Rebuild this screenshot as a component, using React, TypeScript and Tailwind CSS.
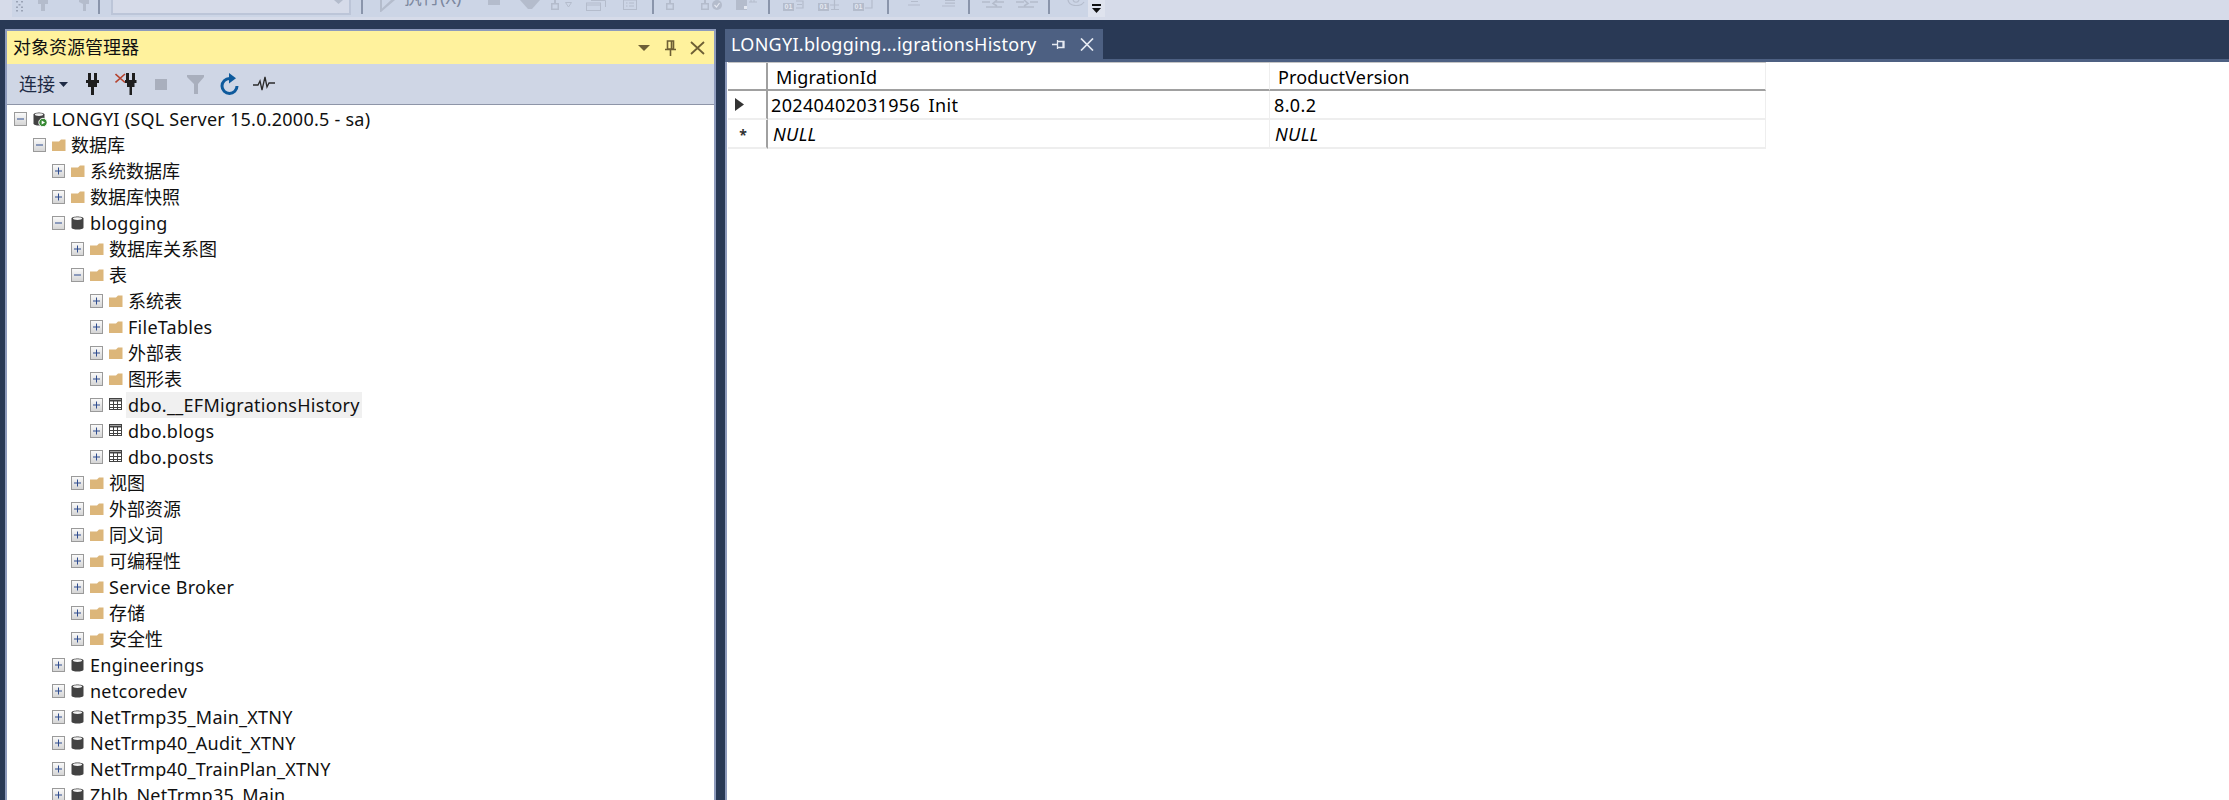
import React from 'react';

type NodeKind = 'server' | 'folder' | 'db' | 'table';

interface TreeNode {
  label: string;
  level: number;
  kind: NodeKind;
  open?: boolean;
  selected?: boolean;
}

const treeNodes: TreeNode[] = [
  { label: 'LONGYI (SQL Server 15.0.2000.5 - sa)', level: 0, kind: 'server', open: true },
  { label: '数据库', level: 1, kind: 'folder', open: true },
  { label: '系统数据库', level: 2, kind: 'folder' },
  { label: '数据库快照', level: 2, kind: 'folder' },
  { label: 'blogging', level: 2, kind: 'db', open: true },
  { label: '数据库关系图', level: 3, kind: 'folder' },
  { label: '表', level: 3, kind: 'folder', open: true },
  { label: '系统表', level: 4, kind: 'folder' },
  { label: 'FileTables', level: 4, kind: 'folder' },
  { label: '外部表', level: 4, kind: 'folder' },
  { label: '图形表', level: 4, kind: 'folder' },
  { label: 'dbo.__EFMigrationsHistory', level: 4, kind: 'table', selected: true },
  { label: 'dbo.blogs', level: 4, kind: 'table' },
  { label: 'dbo.posts', level: 4, kind: 'table' },
  { label: '视图', level: 3, kind: 'folder' },
  { label: '外部资源', level: 3, kind: 'folder' },
  { label: '同义词', level: 3, kind: 'folder' },
  { label: '可编程性', level: 3, kind: 'folder' },
  { label: 'Service Broker', level: 3, kind: 'folder' },
  { label: '存储', level: 3, kind: 'folder' },
  { label: '安全性', level: 3, kind: 'folder' },
  { label: 'Engineerings', level: 2, kind: 'db' },
  { label: 'netcoredev', level: 2, kind: 'db' },
  { label: 'NetTrmp35_Main_XTNY', level: 2, kind: 'db' },
  { label: 'NetTrmp40_Audit_XTNY', level: 2, kind: 'db' },
  { label: 'NetTrmp40_TrainPlan_XTNY', level: 2, kind: 'db' },
  { label: 'Zhlb_NetTrmp35_Main', level: 2, kind: 'db' },
];

const levelPadding = ['pl-[7px]', 'pl-[26px]', 'pl-[45px]', 'pl-[64px]', 'pl-[83px]'];

const Expander = ({ open }: { open?: boolean }) => (
  <svg width="13" height="14" viewBox="0 0 13 14" className="shrink-0">
    <defs>
      <linearGradient id="exp" x1="0" y1="0" x2="0" y2="1">
        <stop offset="0" stopColor="#fbfbfb" />
        <stop offset="1" stopColor="#d4d4d4" />
      </linearGradient>
    </defs>
    <rect x="0.5" y="0.5" width="12" height="13" fill="url(#exp)" stroke="#9a9a9a" />
    <path d="M3 7h7" stroke="#2f4c8f" strokeWidth="1" />
    {!open && <path d="M6.5 3.5v7" stroke="#2f4c8f" strokeWidth="1" />}
  </svg>
);

const NodeIcon = ({ kind }: { kind: NodeKind }) => {
  if (kind === 'folder')
    return (
      <svg width="14" height="14" viewBox="0 0 14 14" className="shrink-0">
        <path d="M0 3.5L7 3.5L9 1.5H13.5V13H0Z" fill="#dcb67a" />
      </svg>
    );
  if (kind === 'db')
    return (
      <svg width="13" height="14" viewBox="0 0 13 14" className="shrink-0">
        <path d="M0.5 2.5C0.5 -0.3 12.5 -0.3 12.5 2.5V11.5C12.5 14.3 0.5 14.3 0.5 11.5Z" fill="#424242" />
        <ellipse cx="6.5" cy="2.6" rx="4.6" ry="1.3" fill="#f2f2f2" />
      </svg>
    );
  if (kind === 'table')
    return (
      <svg width="13" height="12" viewBox="0 0 13 12" className="shrink-0 mb-[2px]">
        <rect x="0.5" y="0.5" width="12" height="11" fill="#fff" stroke="#424242" />
        <path d="M0 1.5h13v2H0z" fill="#424242" />
        <path d="M4.5 3v9M8.5 3v9M0 6.5h13M0 9.5h13" stroke="#424242" strokeWidth="1" />
      </svg>
    );
  return (
    <svg width="14" height="15" viewBox="0 0 14 15" className="shrink-0">
      <path d="M0.5 2.5C0.5 -0.3 11.5 -0.3 11.5 2.5V11.5C11.5 14.3 0.5 14.3 0.5 11.5Z" fill="#424242" />
      <ellipse cx="6" cy="2.6" rx="4.2" ry="1.3" fill="#f2f2f2" />
      <circle cx="10" cy="10.5" r="4.2" fill="#388a34" stroke="#fff" strokeWidth="1" />
      <path d="M8.7 8.4L12 10.5L8.7 12.6Z" fill="#fff" />
    </svg>
  );
};

const Plug = ({ cross }: { cross?: boolean }) => (
  <svg width={cross ? 23 : 14} height="23" viewBox={cross ? '0 0 23 23' : '0 0 14 23'} className="shrink-0">
    {cross && <path d="M0.5 1L10 9.5M10 1L0.5 9.5" stroke="#b5432f" strokeWidth="1.6" />}
    <g transform={cross ? 'translate(10 0)' : undefined} fill="#1e1e1e">
      <rect x={cross ? 1 : 2} y="0" width="3" height="7" />
      <rect x={cross ? 7 : 8} y="0" width="3" height="7" />
      <path
        d={
          cross
            ? 'M0 7H11.5V10H9.5V14H7V22H4.5V14H2V10H0Z'
            : 'M0 7H13V10H11V14H8V22H5V14H2V10H0Z'
        }
      />
    </g>
  </svg>
);

// faded toolbar glyphs, cut off by the top of the window
const fade = '#b4bccc';

const Sep = ({ className }: { className: string }) => (
  <div className={`w-[2px] h-[14px] shrink-0 bg-[#8a95ab] ${className}`} />
);

const FadeBox = ({ className }: { className: string }) => (
  <svg width="8" height="10" viewBox="0 0 8 10" className={`shrink-0 ${className}`}>
    <path d="M4 0v3" stroke={fade} strokeWidth="2" />
    <rect x="0.75" y="3.75" width="6.5" height="5.5" fill="none" stroke={fade} strokeWidth="1.5" />
  </svg>
);

const BinBox = ({ className, tail }: { className: string; tail: string }) => (
  <div className={`flex items-start shrink-0 ${className}`}>
    <div className="w-[11px] h-[8px] mt-[3px] bg-[#b4bccc] text-[7px] leading-[8px] text-center text-[#e4e8f1] font-['Liberation_Sans',sans-serif] font-bold">
      01
    </div>
    <svg width="10" height="10" viewBox="0 0 10 10" className="ml-[1px]">
      <path d={tail} stroke={fade} strokeWidth="1.2" fill="none" />
    </svg>
  </div>
);

const TopToolbar = () => (
  <div className="h-[20px] shrink-0 bg-[#d6dbe9] flex items-start overflow-hidden">
    <div className="h-[17px] w-[1076px] ml-[12px] bg-[#ccd5e6] flex items-start overflow-hidden">
      <svg width="9" height="12" viewBox="0 0 9 12" className="ml-[3px] shrink-0">
        <path d="M1 1h2v1.5H1zM6 1h2v1.5H6zM3.5 4h2v1.5h-2zM1 6.5h2V8H1zM6 6.5h2V8H6zM1 10h2v1.5H1zM6 10h2v1.5H6z" fill="#9aa3b5" />
      </svg>
      <svg width="10" height="11" viewBox="0 0 10 11" className="ml-[14px] shrink-0">
        <path d="M0 0H10V4H7V11H3V4H0Z" fill={fade} />
      </svg>
      <svg width="12" height="11" viewBox="0 0 12 11" className="ml-[29px] shrink-0">
        <path d="M2 0H12V4H9V11H6V4L2 2Z" fill={fade} />
      </svg>
      <Sep className="ml-[9px]" />
      <div className="ml-[11px] w-[240px] h-[15px] shrink-0 border-x-2 border-b-2 border-[#bcc5d8] bg-[#d6dbe9] flex justify-end items-start pr-[6px]">
        <svg width="9" height="4" viewBox="0 0 9 4">
          <path d="M0 0H9L4.5 4Z" fill={fade} />
        </svg>
      </div>
      <Sep className="ml-[10px]" />
      <svg width="15" height="12" viewBox="0 0 15 12" className="ml-[17px] shrink-0">
        <path d="M0 0H15L1 12H0Z M2 0L2 8.5L11 0Z" fillRule="evenodd" fill={fade} />
      </svg>
      <div className="ml-[9px] w-[60px] h-[10px] shrink-0 overflow-hidden relative">
        <span className="block -mt-[15px] text-[18px] leading-[24px] text-[#7d889f] whitespace-nowrap font-['Noto_Sans','Noto_Sans_CJK_SC',sans-serif]">
          执行(X)
        </span>
      </div>
      <div className="ml-[24px] w-[12px] h-[5px] shrink-0 bg-[#b4bccc]" />
      <svg width="20" height="9" viewBox="0 0 20 9" className="ml-[20px] shrink-0">
        <path d="M0 0H20L12 9H8Z" fill={fade} />
      </svg>
      <FadeBox className="ml-[11px]" />
      <svg width="7" height="6" viewBox="0 0 7 6" className="ml-[6px] mt-[2px] shrink-0">
        <path d="M0.5 0.5H6.5L3.5 5Z" stroke={fade} fill="none" />
      </svg>
      <svg width="20" height="11" viewBox="0 0 20 11" className="ml-[14px] shrink-0">
        <rect x="0.5" y="3" width="14" height="7.5" fill="none" stroke={fade} />
        <path d="M0 5h15M5 0.5h14.5V7" stroke={fade} fill="none" />
      </svg>
      <svg width="14" height="10" viewBox="0 0 14 10" className="ml-[17px] shrink-0">
        <rect x="0.5" y="0" width="13" height="9.5" fill="none" stroke={fade} />
        <path d="M3 3h1.5M6 3h5M3 6h1.5M6 6h5" stroke={fade} />
      </svg>
      <Sep className="ml-[15px]" />
      <FadeBox className="ml-[12px]" />
      <FadeBox className="ml-[27px]" />
      <svg width="10" height="10" viewBox="0 0 10 10" className="ml-[3px] shrink-0">
        <circle cx="5" cy="5" r="5" fill={fade} />
        <path d="M2.5 5l2 2 3-4" stroke="#e4e8f1" fill="none" strokeWidth="1.2" />
      </svg>
      <svg width="21" height="10" viewBox="0 0 21 10" className="ml-[14px] shrink-0">
        <rect x="0" y="0" width="11" height="10" fill={fade} />
        <rect x="8" y="6" width="3" height="3" fill="#e4e8f1" />
        <path d="M13 2H21M15 0V2M18 0V2" stroke={fade} />
      </svg>
      <Sep className="ml-[11px]" />
      <BinBox className="ml-[13px]" tail="M1 1H8V8H1M2 4.5H7" />
      <BinBox className="ml-[13px]" tail="M0 5H9M4.5 0V10M1 9.5H9" />
      <BinBox className="ml-[13px]" tail="M7 0V8H0" />
      <Sep className="ml-[12px]" />
      <svg width="12" height="6" viewBox="0 0 12 6" className="ml-[19px] shrink-0">
        <path d="M3 1.5H10M0 5H12" stroke={fade} strokeWidth="1.2" />
      </svg>
      <svg width="13" height="7" viewBox="0 0 13 7" className="ml-[22px] shrink-0">
        <path d="M3 0.5H13M3 3.2H13M0 6H13" stroke={fade} strokeWidth="1.2" />
      </svg>
      <Sep className="ml-[13px]" />
      <svg width="22" height="8" viewBox="0 0 22 8" className="ml-[12px] shrink-0">
        <path d="M0 2H8M13 2H22M4 7H20M15 0L11 3.5L15 6" stroke={fade} strokeWidth="1.6" fill="none" />
      </svg>
      <svg width="22" height="8" viewBox="0 0 22 8" className="ml-[12px] shrink-0">
        <path d="M0 2H8M14 2H22M2 7H18M8 0L12 3.5L8 6" stroke={fade} strokeWidth="1.6" fill="none" />
      </svg>
      <Sep className="ml-[10px]" />
      <svg width="18" height="6" viewBox="0 0 18 6" className="ml-[17px] shrink-0">
        <path d="M1 0C2 7 14 7 17 2M6 0C7 3 11 3 12 0" stroke={fade} strokeWidth="1.2" fill="none" />
      </svg>
    </div>
    <div className="h-[17px] w-[17px] shrink-0 bg-[#dfe3ee] flex flex-col items-center pt-[4px] gap-[2px]">
      <div className="w-[9px] h-[2px] bg-[#111]" />
      <svg width="9" height="5" viewBox="0 0 9 5">
        <path d="M0 0H9L4.5 5Z" fill="#111" />
      </svg>
    </div>
  </div>
);

const ExplorerPanel = () => (
  <div className="w-[711px] h-full shrink-0 border-x-2 border-t-2 border-[#8e9bbc] flex flex-col">
    <div className="h-[33px] shrink-0 bg-[#fff29d] flex items-center pl-[6px] text-[18px] text-[#111]">
      <span>对象资源管理器</span>
      <svg width="12" height="6" viewBox="0 0 12 6" className="ml-auto">
        <path d="M0 0H12L6 6Z" fill="#6e5f35" />
      </svg>
      <svg width="11" height="16" viewBox="0 0 11 16" className="ml-[15px]">
        <path d="M2.5 1h6v8h-6zM0 9.5h11M5.5 10v6M6.5 1v8" stroke="#6e5f35" strokeWidth="1.6" fill="none" />
      </svg>
      <svg width="15" height="14" viewBox="0 0 15 14" className="ml-[14px] mr-[9px]">
        <path d="M1 1L14 13M14 1L1 13" stroke="#6e5f35" strokeWidth="1.8" />
      </svg>
    </div>
    <div className="h-[41px] shrink-0 bg-[#cfd6e5] border-b border-[#8e95a8] flex items-center pl-[12px] text-[18px] text-[#1e2a44]">
      <span>连接</span>
      <svg width="9" height="5" viewBox="0 0 9 5" className="ml-[4px] mt-[1px]">
        <path d="M0 0H9L4.5 5Z" fill="#1e2a44" />
      </svg>
      <div className="ml-[18px]">
        <Plug />
      </div>
      <div className="ml-[15px]">
        <Plug cross />
      </div>
      <div className="ml-[17px] w-[12px] h-[11px] bg-[#a9afbd]" />
      <svg width="17" height="19" viewBox="0 0 17 19" className="ml-[20px]">
        <path d="M0 0H17V2L11 9V19H7V9L0 2Z" fill="#a9afbd" />
      </svg>
      <svg width="19" height="22" viewBox="0 0 19 22" className="ml-[16px]">
        <path d="M9.5 5.5A7.5 7.5 0 1 0 17 13" stroke="#0e5a9c" strokeWidth="3" fill="none" />
        <path d="M9 0V10.5L16 5.2Z" fill="#0e5a9c" />
      </svg>
      <svg width="22" height="16" viewBox="0 0 22 16" className="ml-[14px]">
        <path d="M0 9H5L7 5L9 14L12 1L14 11L16 7H22" stroke="#2b2b2b" strokeWidth="1.3" fill="none" />
      </svg>
    </div>
    <div className="flex-1 bg-white pt-[1px] overflow-hidden">
      {treeNodes.map((node) => (
        <div key={node.label} className={`flex items-center h-[26px] ${levelPadding[node.level]}`}>
          <Expander open={node.open} />
          <div className="ml-[6px] w-[13px] flex items-center shrink-0">
            <NodeIcon kind={node.kind} />
          </div>
          <span
            className={
              node.selected
                ? 'ml-[4px] px-[2px] h-[26px] leading-[26px] bg-[#f0f0f0] text-[18px] text-[#111] whitespace-nowrap tracking-[0.28px]'
                : /[A-Za-z]/.test(node.label)
                  ? 'ml-[6px] h-[26px] leading-[26px] text-[18px] text-[#111] whitespace-nowrap tracking-[0.25px]'
                  : 'ml-[6px] h-[26px] leading-[26px] text-[18px] text-[#111] whitespace-nowrap'
            }
          >
            {node.label}
          </span>
        </div>
      ))}
    </div>
  </div>
);

const cellText = 'text-[18px] text-black whitespace-nowrap overflow-hidden h-[20px] leading-[22px] tracking-[0.36px]';
const headText = 'h-[28px] border-r border-b-2 border-r-[#eeeeee] border-b-[#a0a0a0] text-[18px] leading-[28px] text-black tracking-[0.15px]';

const ResultPane = () => (
  <div className="flex-1 h-full flex flex-col min-w-0">
    <div className="h-[30px] shrink-0 flex items-stretch">
      <div className="w-[378px] bg-[#4d6082] flex items-center pl-[6px] text-[18px] text-white">
        <span className="whitespace-nowrap tracking-[0.27px]">LONGYI.blogging...igrationsHistory</span>
        <svg width="13" height="11" viewBox="0 0 13 11" className="ml-auto">
          <path d="M0 5.5H5M5.5 1V10M6 2.5H12V8.5H6M11 2.5V8.5" stroke="#e6eaf2" strokeWidth="1.3" fill="none" />
        </svg>
        <svg width="14" height="13" viewBox="0 0 14 13" className="ml-[15px] mr-[9px]">
          <path d="M1 0.5L13 12.5M13 0.5L1 12.5" stroke="#e6eaf2" strokeWidth="1.7" />
        </svg>
      </div>
    </div>
    <div className="h-[3px] shrink-0 bg-[#4d6082]" />
    <div className="flex-1 bg-white border-l-2 border-[#8e9bbc] pl-[1px]">
      <div className="grid grid-cols-[40px_502px_496px] w-[1038px] border-t border-[#c4c4c4]">
        <div className="h-[28px] border-r-2 border-b-2 border-[#a0a0a0]" />
        <div className={`${headText} pl-[8px]`}>MigrationId</div>
        <div className={`${headText} pl-[8px]`}>ProductVersion</div>

        <div className="h-[29px] border-r-2 border-b-2 border-r-[#a0a0a0] border-b-[#eeeeee] flex items-center pl-[7px]">
          <svg width="9" height="13" viewBox="0 0 9 13">
            <path d="M0 0L9 6.5L0 13Z" fill="#333" />
          </svg>
        </div>
        <div className="h-[29px] border-r border-b-2 border-[#eeeeee] pl-[3px] pt-[3px]">
          <div className={cellText}>20240402031956_Init</div>
        </div>
        <div className="h-[29px] border-r border-b-2 border-[#eeeeee] pl-[4px] pt-[3px]">
          <div className={cellText}>8.0.2</div>
        </div>

        <div className="h-[29px] border-r-2 border-b-2 border-r-[#a0a0a0] border-b-[#eeeeee] flex items-center justify-center pr-[8px] pt-[3px]">
          <span className="text-[14px] font-bold leading-none text-[#333]">*</span>
        </div>
        <div className="h-[29px] border-r border-b-2 border-[#eeeeee] pl-[5px] pt-[3px]">
          <div className={`${cellText} italic`}>NULL</div>
        </div>
        <div className="h-[29px] border-r border-b-2 border-[#eeeeee] pl-[5px] pt-[3px]">
          <div className={`${cellText} italic`}>NULL</div>
        </div>
      </div>
    </div>
  </div>
);

const App: React.FC = () => (
  <div className="w-[2229px] h-[800px] overflow-hidden flex flex-col bg-[#293955] font-['Noto_Sans','Noto_Sans_CJK_SC',sans-serif]">
    <TopToolbar />
    <div className="flex-1 min-h-0 flex gap-[9px] pl-[5px] pt-[9px]">
      <ExplorerPanel />
      <ResultPane />
    </div>
  </div>
);

export default App;
